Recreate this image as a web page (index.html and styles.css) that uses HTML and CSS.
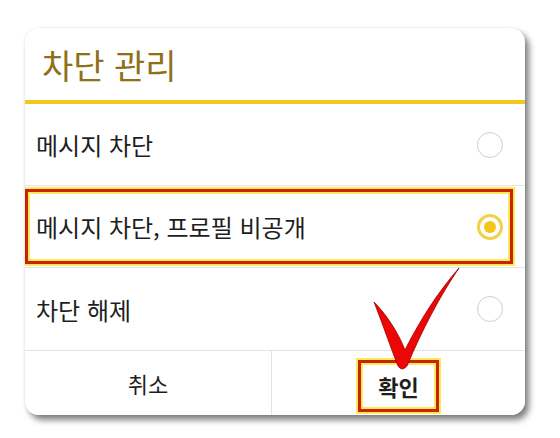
FILE: index.html
```html
<!DOCTYPE html>
<html lang="ko">
<head>
  <meta charset="UTF-8">
  <meta name="viewport" content="width=device-width, initial-scale=1.0">
  <title>차단 관리</title>
  <link rel="stylesheet" href="styles.css">
</head>
<body>
  <div class="dialog">
    <div class="dialog-title">차단 관리</div>

    <ul class="option-list">
      <li class="option">
        <span>메시지 차단</span>
        <span class="radio"></span>
      </li>
      <li class="option selected">
        <span>메시지 차단, 프로필 비공개</span>
        <span class="radio checked"></span>
      </li>
      <li class="option">
        <span>차단 해제</span>
        <span class="radio"></span>
      </li>
    </ul>

    <div class="dialog-buttons">
      <button class="btn">취소</button>
      <button class="btn btn-ok"><span class="mark">확인</span></button>
    </div>
  </div>

  <svg class="check-mark" width="110" height="115" viewBox="0 0 110 115">
    <path d="M14 40 C22 60, 30 84, 38 104 Q42 110, 47 104 C62 68, 80 34, 99 6 C78 30, 60 58, 45 88 C38 70, 26 52, 14 40 Z"
          fill="#ec0606" stroke="#9c0000" stroke-width="0.8"/>
  </svg>
</body>
</html>
```

FILE: styles.css
```css
:root {
  --gold: #f2c81e;
  --title: #8f7016;
  --text: #1e1e1e;
  --line: #e4e4e4;
  --red: #c92400;
  --glow: #ffe95a;
}

body {
  font-family: 'Noto Sans CJK KR', 'Noto Sans', sans-serif;
  background-color: #fff;
  color: var(--text);
  margin: 0;
  padding: 0;
  position: relative;
  width: 560px;
  height: 438px;
  overflow: hidden;
}

.dialog {
  margin: 28px 0 0 25px;
  width: 500px;
  background: #fff;
  border-radius: 14px;
  box-shadow: 0 0 3px rgba(0,0,0,0.08), 4px 5px 6px rgba(0,0,0,0.5);
  overflow: hidden;
}

.dialog-title {
  height: 72px;
  display: flex;
  align-items: center;
  padding-left: 17px;
  font-size: 34px;
  color: var(--title);
  border-bottom: 4px solid var(--gold);
}

.option-list {
  list-style: none;
  margin: 0;
  padding: 0;
}

.option {
  position: relative;
  height: 81px;
  display: flex;
  align-items: center;
  justify-content: space-between;
  padding: 0 22px 0 11px;
  font-size: 24px;
  border-bottom: 1px solid var(--line);
}

.option:last-child {
  height: 82px;
}

.option.selected::after {
  content: "";
  position: absolute;
  left: 0;
  right: 12px;
  top: 3px;
  bottom: 3px;
  border: 3px solid var(--red);
  box-shadow: 0 0 0 2px var(--glow), inset 0 0 0 2px var(--glow);
}

.radio {
  width: 26px;
  height: 26px;
  border: 1px solid #cfcfcf;
  border-radius: 50%;
  box-sizing: border-box;
  position: relative;
}

.radio.checked {
  border: 3px solid #f3d04a;
}

.radio.checked::after {
  content: "";
  position: absolute;
  left: 4px;
  top: 4px;
  width: 12px;
  height: 12px;
  border-radius: 50%;
  background: #f5c518;
}

.dialog-buttons {
  display: grid;
  grid-template-columns: 246px 1fr;
  height: 64px;
}

.btn {
  font-family: inherit;
  font-size: 22px;
  color: var(--text);
  background: #fff;
  border: none;
  padding: 0;
  display: flex;
  align-items: center;
  justify-content: center;
}

.btn-ok {
  border-left: 1px solid var(--line);
  font-weight: 700;
  padding-top: 6px;
}

.mark {
  display: flex;
  align-items: center;
  justify-content: center;
  width: 75px;
  height: 46px;
  border: 3px solid var(--red);
  box-shadow: 0 0 0 2px var(--glow), inset 0 0 0 2px var(--glow);
}

.check-mark {
  position: absolute;
  left: 360px;
  top: 262px;
}
```
